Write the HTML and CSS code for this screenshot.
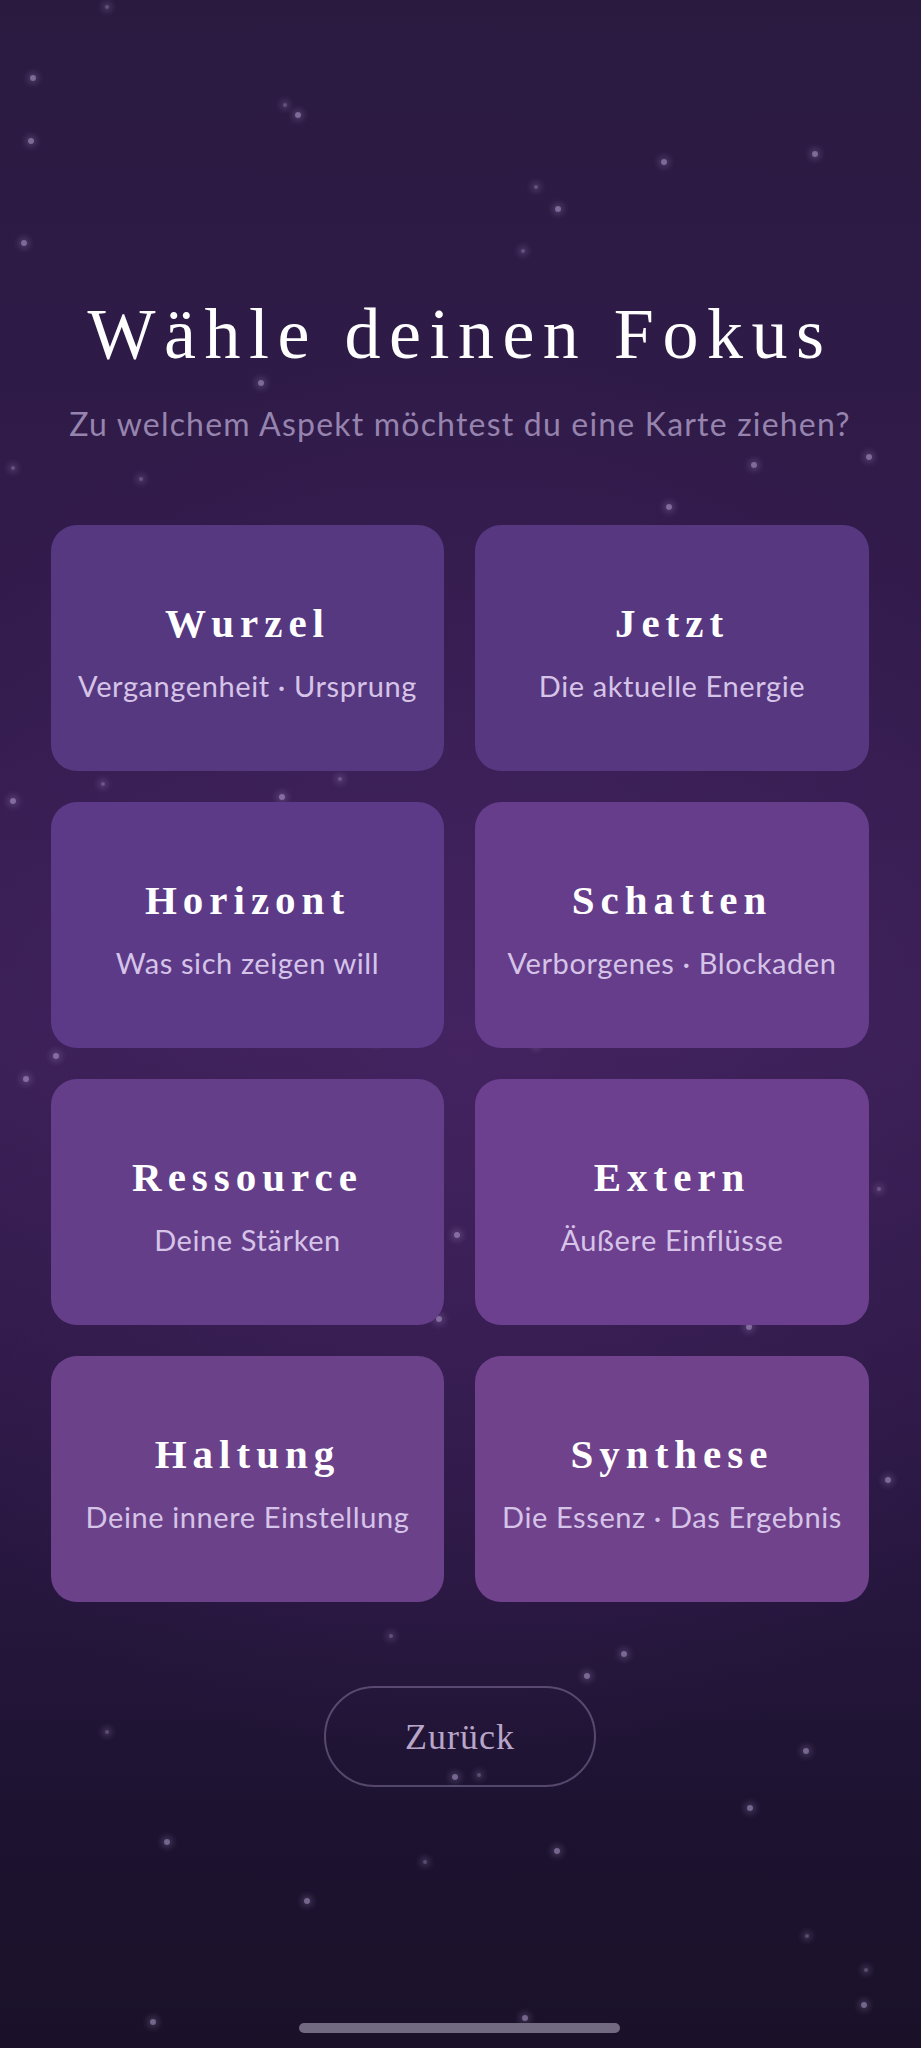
FILE: index.html
```html
<!DOCTYPE html>
<html lang="de">
<head>
    <meta charset="UTF-8">
    <meta name="viewport" content="width=device-width, initial-scale=1.0">
    <title>Wähle deinen Fokus</title>
    <link rel="stylesheet" href="styles.css">
</head>
<body>
    <div class="sky" id="sky"></div>

    <main class="screen">
        <h1 class="title">Wähle deinen Fokus</h1>
        <p class="subtitle">Zu welchem Aspekt möchtest du eine Karte ziehen?</p>

        <div class="focus-grid">
            <button class="focus-card">
                <span class="focus-name">Wurzel</span>
                <span class="focus-hint">Vergangenheit · Ursprung</span>
            </button>
            <button class="focus-card">
                <span class="focus-name">Jetzt</span>
                <span class="focus-hint">Die aktuelle Energie</span>
            </button>
            <button class="focus-card">
                <span class="focus-name">Horizont</span>
                <span class="focus-hint">Was sich zeigen will</span>
            </button>
            <button class="focus-card">
                <span class="focus-name">Schatten</span>
                <span class="focus-hint">Verborgenes · Blockaden</span>
            </button>
            <button class="focus-card">
                <span class="focus-name">Ressource</span>
                <span class="focus-hint">Deine Stärken</span>
            </button>
            <button class="focus-card">
                <span class="focus-name">Extern</span>
                <span class="focus-hint">Äußere Einflüsse</span>
            </button>
            <button class="focus-card">
                <span class="focus-name">Haltung</span>
                <span class="focus-hint">Deine innere Einstellung</span>
            </button>
            <button class="focus-card">
                <span class="focus-name">Synthese</span>
                <span class="focus-hint">Die Essenz · Das Ergebnis</span>
            </button>
        </div>

        <button class="back-button">Zurück</button>
    </main>

    <div class="home-indicator"></div>

    <script>
        // Star positions, taken from the design
        const stars = [
            [107, 7], [33, 78], [298, 115], [285, 105], [31, 141], [24, 243],
            [536, 187], [558, 209], [664, 162], [523, 251], [815, 154], [261, 383],
            [13, 468], [754, 465], [869, 457], [141, 479], [669, 507], [192, 571],
            [323, 575], [516, 648], [485, 749], [103, 784], [13, 801], [282, 797],
            [340, 779], [101, 930], [281, 1016], [375, 1041], [56, 1056], [26, 1079],
            [536, 1045], [720, 1088], [827, 1123], [879, 1189], [457, 1235], [439, 1319],
            [68, 1300], [159, 1297], [749, 1327], [340, 1400], [431, 1414], [98, 1542],
            [170, 1552], [888, 1480], [523, 1585], [391, 1636], [624, 1654], [587, 1676],
            [107, 1732], [806, 1751], [455, 1777], [479, 1775], [750, 1808], [167, 1842],
            [425, 1862], [557, 1851], [307, 1901], [866, 1970], [153, 2022], [525, 2018],
            [807, 1936], [864, 2005]
        ];

        const sky = document.getElementById('sky');
        stars.forEach(function (pos, i) {
            const star = document.createElement('span');
            star.className = i % 3 === 0 ? 'star small' : 'star';
            star.style.left = pos[0] + 'px';
            star.style.top = pos[1] + 'px';
            sky.appendChild(star);
        });
    </script>
</body>
</html>
```

FILE: styles.css
```css
body {
    margin: 0;
    width: 921px;
    height: 2048px;
    overflow: hidden;
    position: relative;
    font-family: Lato, "Open Sans", sans-serif;
    background:
        radial-gradient(ellipse 70% 35% at 50% 52%, rgba(80, 40, 110, 0.45), rgba(80, 40, 110, 0) 100%),
        linear-gradient(180deg, #2a1a40 0%, #321b4c 30%, #3a1f55 50%, #2b1844 72%, #1d1331 88%, #1a1129 100%);
}
.sky {
    position: absolute;
    inset: 0;
    pointer-events: none;
}
.star {
    position: absolute;
    width: 6px;
    height: 6px;
    margin: -3px 0 0 -3px;
    border-radius: 50%;
    background: rgba(205, 185, 235, 0.5);
    box-shadow: 0 0 6px 3px rgba(205, 185, 235, 0.2);
}
.star.small {
    width: 4px;
    height: 4px;
    margin: -2px 0 0 -2px;
    background: rgba(205, 185, 235, 0.35);
}
.screen {
    position: relative;
    display: flex;
    flex-direction: column;
    align-items: center;
    padding: 294px 52px 0 51px;
}
.title {
    margin: 0;
    font-family: "Liberation Serif", "DejaVu Serif", serif;
    font-weight: normal;
    font-size: 72px;
    line-height: 80px;
    letter-spacing: 8.5px;
    color: #ffffff;
}
.subtitle {
    margin: 30px 0 0;
    font-size: 32px;
    line-height: 40px;
    letter-spacing: 1.2px;
    color: #9684ae;
}
.focus-grid {
    margin-top: 81px;
    width: 100%;
    display: grid;
    grid-template-columns: 393px 394px;
    grid-auto-rows: 246px;
    gap: 31px;
}
.focus-card {
    display: flex;
    flex-direction: column;
    align-items: center;
    justify-content: center;
    gap: 22px;
    padding: 6px 0 0;
    border: none;
    border-radius: 26px;
    background-color: #563880;
    cursor: pointer;
    font-family: inherit;
}
.focus-card:nth-child(2) { background-color: #57377f; }
.focus-card:nth-child(3) { background-color: #5c3a88; }
.focus-card:nth-child(4) { background-color: #653d8b; }
.focus-card:nth-child(5) { background-color: #653e8a; }
.focus-card:nth-child(6) { background-color: #6d408f; }
.focus-card:nth-child(7) { background-color: #6b418a; }
.focus-card:nth-child(8) { background-color: #70428c; }
.focus-name {
    font-family: "Liberation Serif", "DejaVu Serif", serif;
    font-weight: bold;
    font-size: 41px;
    line-height: 48px;
    letter-spacing: 6px;
    color: #ffffff;
}
.focus-hint {
    font-size: 29px;
    line-height: 34px;
    letter-spacing: 0.6px;
    color: #d6c4e8;
}
.back-button {
    margin-top: 84px;
    width: 272px;
    height: 101px;
    border: 2px solid rgba(190, 170, 215, 0.35);
    border-radius: 51px;
    background: transparent;
    font-family: "Liberation Serif", "DejaVu Serif", serif;
    font-size: 36px;
    letter-spacing: 1px;
    color: #b8a6c9;
    cursor: pointer;
}
.home-indicator {
    position: absolute;
    left: 299px;
    top: 2023px;
    width: 321px;
    height: 10px;
    border-radius: 5px;
    background: #716a80;
}
```
